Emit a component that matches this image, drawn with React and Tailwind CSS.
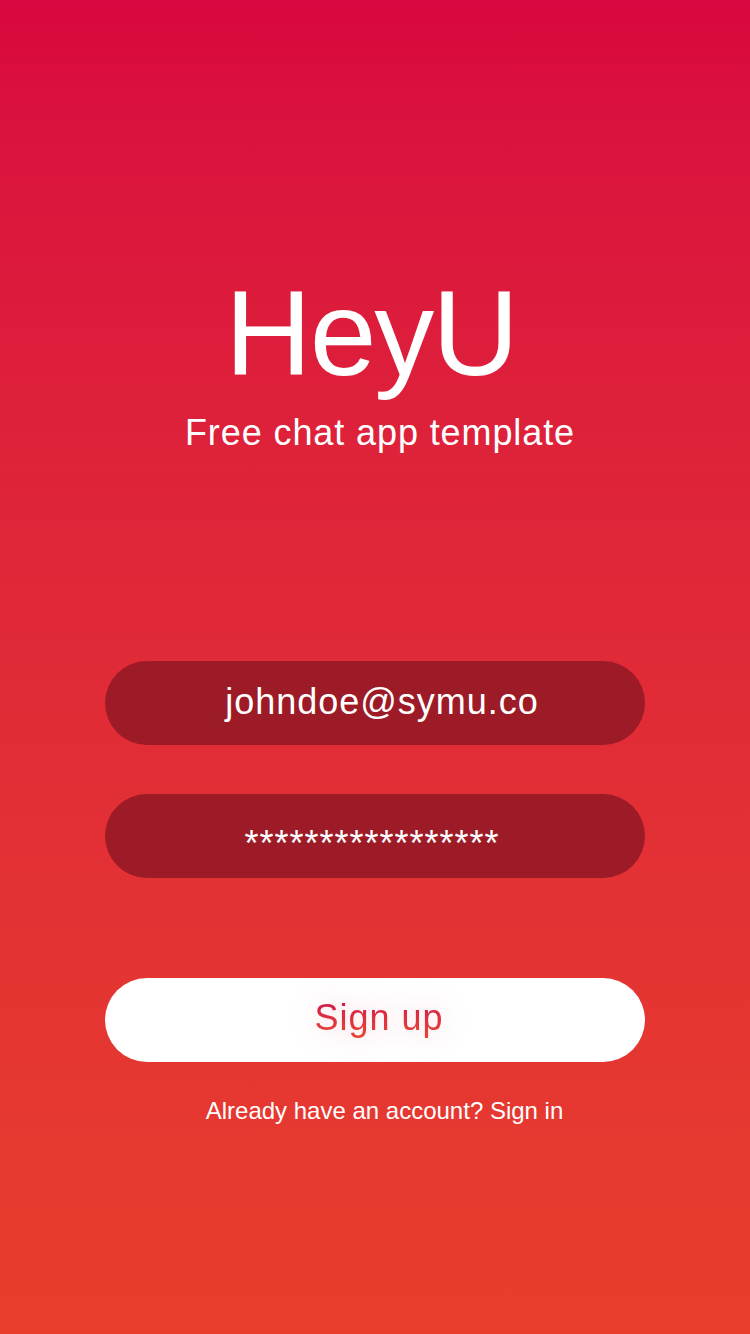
import React from 'react';

const font = { fontFamily: '"Liberation Sans", Arial, sans-serif' };

const PillInput = ({ value, type = 'text', className = '' }) => (
  <input
    type={type}
    value={value}
    readOnly
    className={`w-full h-[84px] rounded-full bg-[#9d1b27] text-white text-center text-[36px] tracking-[1px] outline-none ${className}`}
    style={font}
  />
);

export default function App() {
  return (
    <div
      className="w-[750px] h-[1334px] flex flex-col items-center bg-gradient-to-b from-[#d9073f] to-[#e83e2c] text-white"
      style={font}
    >
      {/* Brand */}
      <h1 className="mt-[273px] pr-[8px] text-[120px] leading-none font-normal tracking-[-2px]">HeyU</h1>
      <p className="mt-[22px] pl-[10px] text-[36px] leading-none tracking-[0.9px]">Free chat app template</p>

      {/* Form */}
      <div className="mt-[210px] w-[540px] flex flex-col">
        <PillInput value="johndoe@symu.co" className="pl-[14px] pb-[2px]" />
        <PillInput value="*****************" className="mt-[49px] pr-[6px] pt-[16px]" />

        <button className="mt-[100px] h-[84px] w-full rounded-full bg-white flex items-center justify-center pb-[4px]">
          <span className="pl-[8px] drop-shadow-[0_0_14px_rgba(225,30,70,0.25)]">
            <span className="text-[36px] leading-none tracking-[1px] bg-gradient-to-b from-[#d20a4a] to-[#e8452f] bg-clip-text text-transparent">
              Sign up
            </span>
          </span>
        </button>

        <p className="mt-[37px] text-[24px] leading-none text-center pl-[19px]">
          Already have an account? Sign in
        </p>
      </div>
    </div>
  );
}
